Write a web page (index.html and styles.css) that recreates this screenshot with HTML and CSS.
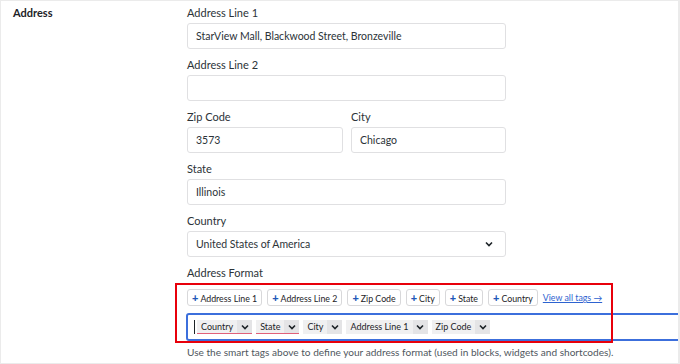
FILE: index.html
```html
<!DOCTYPE html>
<html>
<head>
<meta charset="utf-8">
<link rel="stylesheet" href="styles.css">
</head>
<body>
<div class="page">
  <div class="row">
    <div class="row-label">Address</div>
    <div class="fields">
      <div class="field">
        <label class="flabel">Address Line 1</label>
        <div class="input">StarView Mall, Blackwood Street, Bronzeville</div>
      </div>
      <div class="field">
        <label class="flabel">Address Line 2</label>
        <div class="input"></div>
      </div>
      <div class="field-pair">
        <div class="field">
          <label class="flabel">Zip Code</label>
          <div class="input">3573</div>
        </div>
        <div class="field">
          <label class="flabel">City</label>
          <div class="input">Chicago</div>
        </div>
      </div>
      <div class="field">
        <label class="flabel">State</label>
        <div class="input">Illinois</div>
      </div>
      <div class="field">
        <label class="flabel">Country</label>
        <div class="input select">
          <span>United States of America</span>
          <svg class="sel-chev" width="8" height="6" viewBox="0 0 8 6"><path d="M1 1.5 L4 4.5 L7 1.5" fill="none" stroke="#1d2327" stroke-width="1.6"/></svg>
        </div>
      </div>
      <div class="field format">
        <label class="flabel">Address Format</label>
        <div class="smart-tags">
          <span class="stag"><b>+</b>Address Line 1</span>
          <span class="stag"><b>+</b>Address Line 2</span>
          <span class="stag"><b>+</b>Zip Code</span>
          <span class="stag"><b>+</b>City</span>
          <span class="stag"><b>+</b>State</span>
          <span class="stag"><b>+</b>Country</span>
          <a class="view-all">View all tags &rarr;</a>
        </div>
        <div class="format-input">
          <span class="caret"></span>
          <span class="ftag spell"><span class="ftag-text">Country</span><span class="ftag-chev"><svg width="8" height="6" viewBox="0 0 8 6"><path d="M1 1.5 L4 4.5 L7 1.5" fill="none" stroke="#1d2327" stroke-width="1.6"/></svg></span></span>
          <span class="ftag spell"><span class="ftag-text">State</span><span class="ftag-chev"><svg width="8" height="6" viewBox="0 0 8 6"><path d="M1 1.5 L4 4.5 L7 1.5" fill="none" stroke="#1d2327" stroke-width="1.6"/></svg></span></span>
          <span class="ftag"><span class="ftag-text">City</span><span class="ftag-chev"><svg width="8" height="6" viewBox="0 0 8 6"><path d="M1 1.5 L4 4.5 L7 1.5" fill="none" stroke="#1d2327" stroke-width="1.6"/></svg></span></span>
          <span class="ftag"><span class="ftag-text">Address Line 1</span><span class="ftag-chev"><svg width="8" height="6" viewBox="0 0 8 6"><path d="M1 1.5 L4 4.5 L7 1.5" fill="none" stroke="#1d2327" stroke-width="1.6"/></svg></span></span>
          <span class="ftag"><span class="ftag-text">Zip Code</span><span class="ftag-chev"><svg width="8" height="6" viewBox="0 0 8 6"><path d="M1 1.5 L4 4.5 L7 1.5" fill="none" stroke="#1d2327" stroke-width="1.6"/></svg></span></span>
        </div>
        <p class="help">Use the smart tags above to define your address format (used in blocks, widgets and shortcodes).</p>
        <div class="highlight"></div>
      </div>
    </div>
  </div>
</div>
</body>
</html>
```
FILE: styles.css
```css
* { box-sizing: border-box; }
html, body {
  margin: 0;
  padding: 0;
  background: #ffffff;
}
body {
  width: 680px;
  height: 364px;
  overflow: hidden;
  font-family: Lato, "Noto Sans", sans-serif;
  color: #2c3338;
}
.page {
  width: 680px;
  height: 364px;
  border: 1px solid #ebebeb;
  border-right: 2px solid #ebebeb;
  padding: 4px 0 0 12px;
  overflow: hidden;
  position: relative;
}
.row {
  display: grid;
  grid-template-columns: 174px 1fr;
}
.row-label {
  font-size: 11px;
  font-weight: 700;
  line-height: 16px;
  color: #1d2327;
}
.fields {
  display: flex;
  flex-direction: column;
  gap: 8px;
  width: 319px;
}
.field {
  display: flex;
  flex-direction: column;
  gap: 2px;
}
.field-pair {
  display: grid;
  grid-template-columns: 156px 155px;
  gap: 8px;
}
.flabel {
  font-size: 11px;
  line-height: 16px;
  color: #2c3338;
}
.input {
  height: 26px;
  border: 1px solid #e0e0e2;
  border-radius: 3px;
  padding: 0 8px;
  font-size: 10.5px;
  line-height: 24px;
  color: #2c3338;
  background: #fff;
}
.select {
  display: flex;
  align-items: center;
  justify-content: space-between;
  padding-right: 12px;
}
.sel-chev { display: block; }
.format { position: relative; gap: 0; }
.smart-tags {
  margin-top: 8px;
  display: flex;
  align-items: center;
  gap: 5px;
  white-space: nowrap;
}
.stag {
  height: 17px;
  border: 1px solid #d8d8da;
  border-radius: 3px;
  padding: 0 4px;
  font-size: 8.8px;
  line-height: 15px;
  color: #1d2327;
  background: #fff;
}
.stag b {
  color: #2157b8;
  font-weight: 900;
  font-size: 11px;
  margin-right: 2px;
}
.view-all {
  font-size: 8.8px;
  color: #2d63d0;
  text-decoration: underline;
}
.format-input {
  margin-top: 7px;
  margin-left: -1px;
  width: 520px;
  height: 28px;
  border: 2px solid #3c6fdc;
  border-radius: 3px;
  display: flex;
  align-items: center;
  gap: 4px;
  padding-left: 6px;
  white-space: nowrap;
}
.caret {
  width: 1px;
  height: 14px;
  background: #1d2327;
  margin-right: -2px;
}
.ftag {
  display: flex;
  height: 14px;
  font-size: 9px;
  line-height: 14px;
  color: #1d2327;
}
.ftag-text {
  background: #f0f0f1;
  padding: 0 4px;
}
.ftag-chev {
  background: #e4e4e6;
  width: 15px;
  display: flex;
  align-items: center;
  justify-content: center;
}
.ftag.spell .ftag-text, .ftag.spell .ftag-chev { border-bottom: 1px solid #e0607a; }
.help {
  margin: 3px 0 0;
  font-size: 10.1px;
  line-height: 16px;
  color: #50575e;
  white-space: nowrap;
}
.highlight {
  position: absolute;
  left: -12px;
  top: 18px;
  width: 438px;
  height: 60px;
  border: 2px solid #e8000b;
  pointer-events: none;
}
```
